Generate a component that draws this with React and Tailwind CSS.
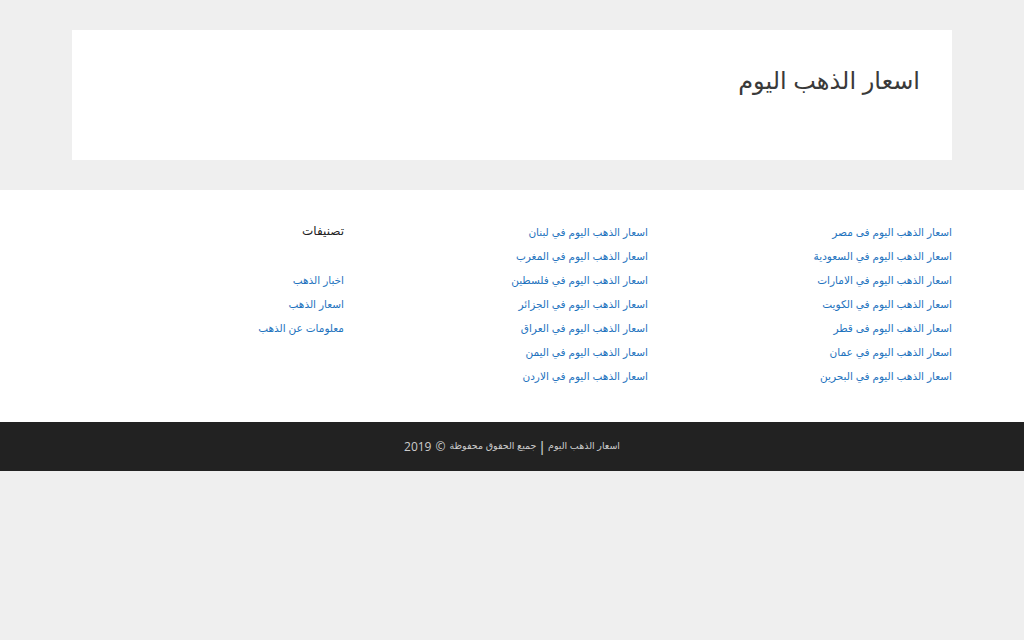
import React from "react";

const col1 = [
  "اسعار الذهب اليوم فى مصر",
  "اسعار الذهب اليوم في السعودية",
  "اسعار الذهب اليوم في الامارات",
  "اسعار الذهب اليوم في الكويت",
  "اسعار الذهب اليوم فى قطر",
  "اسعار الذهب اليوم في عمان",
  "اسعار الذهب اليوم في البحرين",
];
const col2 = [
  "اسعار الذهب اليوم في لبنان",
  "اسعار الذهب اليوم في المغرب",
  "اسعار الذهب اليوم في فلسطين",
  "اسعار الذهب اليوم في الجزائر",
  "اسعار الذهب اليوم في العراق",
  "اسعار الذهب اليوم في اليمن",
  "اسعار الذهب اليوم في الاردن",
];
const col3 = ["اخبار الذهب", "اسعار الذهب", "معلومات عن الذهب"];

function Links({ items }) {
  return (
    <ul className="flex flex-col">
      {items.map((t) => (
        <li key={t} className="h-[24px] leading-[24px]">
          <a href="#" className="text-[#1e73be] text-[10.5px]">{t}</a>
        </li>
      ))}
    </ul>
  );
}

export default function App() {
  return (
    <div
      dir="rtl"
      className="min-h-[640px] bg-[#efefef]"
      style={{ fontFamily: "Arial, 'Liberation Sans', 'DejaVu Sans', sans-serif" }}
    >
      <div className="pt-[30px] pb-[30px]">
        <header className="mx-auto w-[880px] h-[130px] bg-white px-[32px] pt-[39px]">
          <div className="text-[24px] leading-[24px] text-[#3a3a3a]">اسعار الذهب اليوم</div>
        </header>
      </div>
      <div className="bg-white pt-[29px] pb-[35px]">
        <div className="mx-auto w-[912px] grid grid-cols-3">
          <div className="px-[16px]">
            <Links items={col1} />
          </div>
          <div className="px-[16px]">
            <Links items={col2} />
          </div>
          <div className="px-[16px]">
            <div className="h-[24px] leading-[24px] text-[12px] text-[#222] mb-[24px]">تصنيفات</div>
            <Links items={col3} />
          </div>
        </div>
      </div>
      <div className="bg-[#222222] h-[49px] flex items-center justify-center text-[#cccccc] text-[9.5px]">
        <span className="flex items-center gap-[4px]">
          <span>اسعار الذهب اليوم</span>
          <span className="text-[14px] leading-[14px]">|</span>
          <span>جميع الحقوق محفوظة</span>
          <span style={{ fontFamily: "'Open Sans', sans-serif" }} className="text-[12px]">©</span>
          <span style={{ fontFamily: "'Open Sans', sans-serif" }} className="text-[12px]">2019</span>
        </span>
      </div>
    </div>
  );
}
